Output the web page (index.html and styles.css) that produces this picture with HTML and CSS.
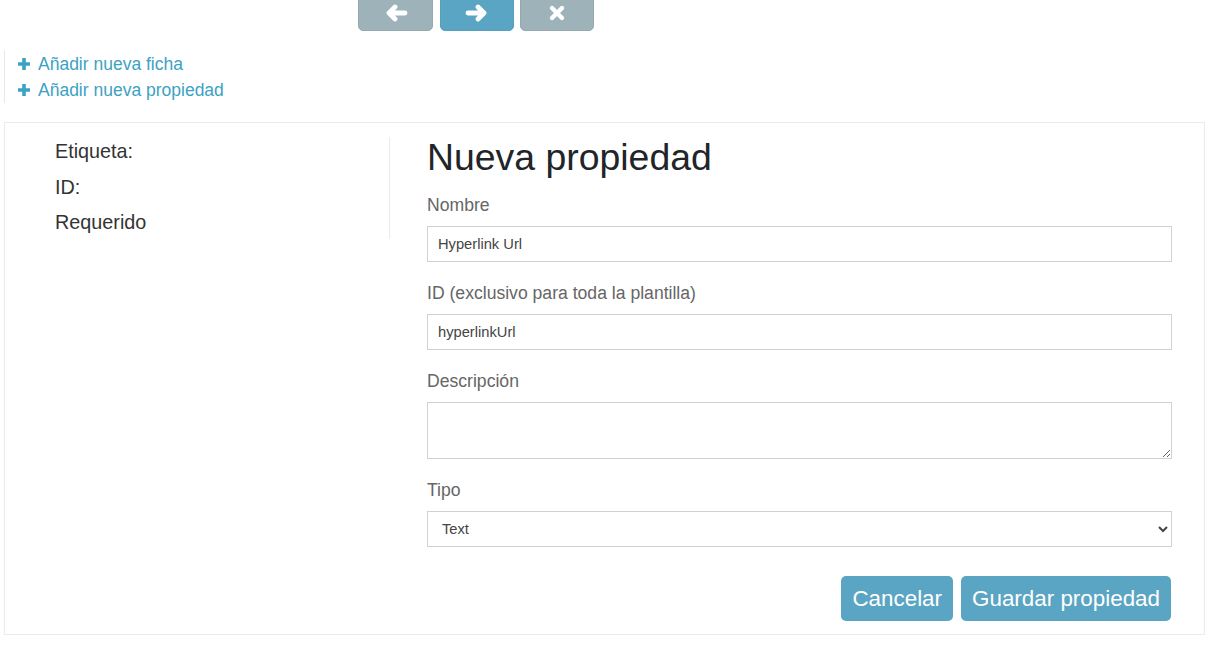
FILE: index.html
```html
<!DOCTYPE html>
<html lang="es">
<head>
<meta charset="utf-8">
<title>Nueva propiedad</title>
<link rel="stylesheet" href="styles.css">
</head>
<body>
<div class="toolbar">
  <button class="tbtn tbtn-grey" type="button" aria-label="Anterior">
    <svg width="24" height="18" viewBox="0 0 24 18"><path d="M21 9H5 M11 3L5 9l6 6" fill="none" stroke="#fff" stroke-width="4.8" stroke-linecap="round" stroke-linejoin="round"/></svg>
  </button>
  <button class="tbtn tbtn-blue" type="button" aria-label="Siguiente">
    <svg width="24" height="18" viewBox="0 0 24 18"><path d="M3 9H19 M13 3L19 9l-6 6" fill="none" stroke="#fff" stroke-width="4.8" stroke-linecap="round" stroke-linejoin="round"/></svg>
  </button>
  <button class="tbtn tbtn-grey" type="button" aria-label="Cerrar">
    <svg width="18" height="18" viewBox="0 0 18 18"><path d="M4 4L14 14 M14 4L4 14" fill="none" stroke="#fff" stroke-width="4.4" stroke-linecap="round"/></svg>
  </button>
</div>

<div class="links">
  <a class="add-link" href="#"><svg class="plus" width="14" height="14" viewBox="0 0 14 14"><path d="M7 1V13 M1 7H13" fill="none" stroke="currentColor" stroke-width="3.6"/></svg>Añadir nueva ficha</a>
  <a class="add-link" href="#"><svg class="plus" width="14" height="14" viewBox="0 0 14 14"><path d="M7 1V13 M1 7H13" fill="none" stroke="currentColor" stroke-width="3.6"/></svg>Añadir nueva propiedad</a>
</div>

<div class="panel">
  <div class="meta">
    <div class="meta-list">
      <div class="meta-item">Etiqueta:</div>
      <div class="meta-item">ID:</div>
      <div class="meta-item">Requerido</div>
    </div>
  </div>
  <form class="form">
    <h1 class="title">Nueva propiedad</h1>
    <label class="label first">Nombre</label>
    <input class="field" type="text" value="Hyperlink Url">
    <label class="label">ID (exclusivo para toda la plantilla)</label>
    <input class="field" type="text" value="hyperlinkUrl">
    <label class="label">Descripción</label>
    <textarea class="field area"></textarea>
    <label class="label">Tipo</label>
    <select class="field select"><option>Text</option></select>
    <div class="actions">
      <button class="btn" type="button">Cancelar</button>
      <button class="btn" type="button">Guardar propiedad</button>
    </div>
  </form>
</div>
</body>
</html>
```

FILE: styles.css
```css
* { box-sizing: border-box; }

body {
  margin: 0;
  background: #fff;
  font-family: "Liberation Sans", Arial, sans-serif;
  color: #333;
}

.toolbar {
  display: flex;
  margin-left: 358px;
  margin-top: -5px;
  height: 36px;
}

.tbtn {
  width: 74px;
  height: 36px;
  margin-right: 6px;
  border: 1px solid transparent;
  border-radius: 0 0 5px 5px;
  display: flex;
  align-items: center;
  justify-content: center;
  padding: 0;
}
.tbtn:first-child { width: 75px; margin-right: 7px; }

.tbtn-grey { background: #9db3b9; border-color: #95aab0; }
.tbtn-blue { background: #5aa5c3; border-color: #56a0be; }

.links {
  margin: 19px 0 0 4px;
  border-left: 1px solid #e6e9ec;
  padding: 1px 0 0 12px;
  display: flex;
  flex-direction: column;
}

.add-link {
  color: #3ca2c4;
  text-decoration: none;
  font-size: 17.5px;
  line-height: 26px;
  display: flex;
  align-items: center;
}

.plus {
  margin-right: 7px;
  flex: none;
}

.panel {
  margin: 19px 6px 0 4px;
  border: 1px solid #e9ecef;
  display: flex;
  align-items: flex-start;
  padding: 0 32px 13px 0;
}

.meta {
  width: 385px;
  margin-top: 14px;
  height: 102px;
  border-right: 1px solid #e9ecef;
  flex: none;
}

.meta-list {
  margin-top: -3px;
  padding-left: 50px;
}

.meta-item {
  font-size: 19.8px;
  line-height: 35.5px;
  color: #333;
}

.form {
  flex: 1;
  margin-left: 37px;
  display: flex;
  flex-direction: column;
  padding-top: 12px;
}

.title {
  margin: 0;
  font-weight: normal;
  font-size: 37.4px;
  line-height: 45px;
  color: #212529;
}

.label {
  display: block;
  font-size: 17.6px;
  line-height: 24px;
  color: #666;
  margin: 19px 0 9px;
}
.label.first { margin-top: 13px; }

.field {
  display: block;
  width: 100%;
  height: 36px;
  border: 1px solid #ced2d6;
  border-radius: 0;
  padding: 0 10px;
  font-family: "Liberation Sans", Arial, sans-serif;
  font-size: 14.7px;
  color: #444;
  background: #fff;
  margin: 0;
}

.area {
  height: 57px;
  resize: vertical;
  padding: 6px 10px;
}

.select {
  padding-left: 10px;
}

.actions {
  display: flex;
  justify-content: flex-end;
  gap: 8px;
  margin-top: 29px;
  padding-right: 1px;
}

.btn {
  height: 45px;
  border: none;
  border-radius: 5px;
  background: #5aa5c3;
  color: #fff;
  font-family: "Liberation Sans", Arial, sans-serif;
  font-size: 22.4px;
  padding: 0 11px;
}
```
